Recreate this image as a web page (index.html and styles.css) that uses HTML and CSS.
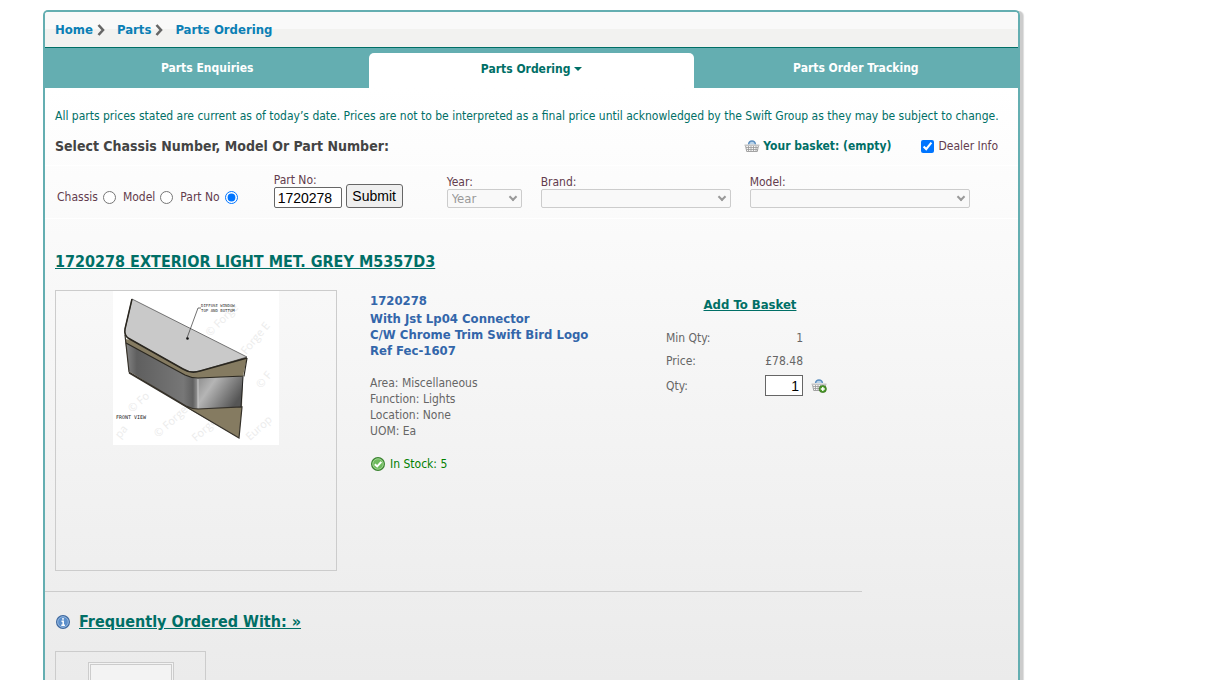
FILE: index.html
```html
<!DOCTYPE html>
<html lang="en">
<head>
    <meta charset="UTF-8">
    <meta name="viewport" content="width=device-width, initial-scale=1.0">
    <title>Parts Ordering</title>
    <link rel="stylesheet" href="styles.css">
</head>
<body>
    <div class="wrapper">
        <!-- Breadcrumb -->
        <nav class="breadcrumb">
            <a href="#">Home</a>
            <svg class="chevron" width="8" height="12" viewBox="0 0 8 12"><path d="M1.5 1 L6 6 L1.5 11" fill="none" stroke="#666" stroke-width="2.6"/></svg>
            <a href="#">Parts</a>
            <svg class="chevron" width="8" height="12" viewBox="0 0 8 12"><path d="M1.5 1 L6 6 L1.5 11" fill="none" stroke="#666" stroke-width="2.6"/></svg>
            <a href="#">Parts Ordering</a>
        </nav>

        <!-- Tabs -->
        <nav class="tabs">
            <a href="#">Parts Enquiries</a>
            <a href="#" class="active">Parts Ordering <span class="caret"></span></a>
            <a href="#">Parts Order Tracking</a>
        </nav>

        <main>
            <p class="notice">All parts prices stated are current as of today’s date. Prices are not to be interpreted as a final price until acknowledged by the Swift Group as they may be subject to change.</p>

            <div class="search-head">
                <h2>Select Chassis Number, Model Or Part Number:</h2>
                <a href="#" class="basket">
                    <svg width="16" height="14" viewBox="0 0 16 14">
                        <path d="M4.5 5.5 Q5 2 8 2 Q11 2 11.5 5.5" fill="#b9d3ea" stroke="#5c8fc0" stroke-width="1.4"/>
                        <path d="M1.5 6.5 H14.5 L13.3 12.5 H2.7 Z" fill="#f6f6f6" stroke="#999" stroke-width="0.9"/>
                        <path d="M0.5 5.5 H15.5 V7 H0.5 Z" fill="#c4c4c4"/>
                        <path d="M2 8.5 H14 M2.5 10.5 H13.5 M4.5 7 V12 M7 7 V12 M9.5 7 V12 M12 7 V12" stroke="#999" stroke-width="0.8"/>
                    </svg>
                    Your basket: (empty)
                </a>
                <label class="dealer"><input type="checkbox" checked> Dealer Info</label>
            </div>

            <!-- Search form -->
            <form class="search">
                <div class="radios">
                    <label>Chassis <input type="radio" name="by"></label>
                    <label>Model <input type="radio" name="by"></label>
                    <label>Part No <input type="radio" name="by" checked></label>
                </div>
                <div class="field part">
                    <label for="partno">Part No:</label>
                    <input type="text" id="partno" value="1720278">
                </div>
                <button type="button" class="submit">Submit</button>
                <div class="field year">
                    <label for="year">Year:</label>
                    <div class="select"><select id="year" disabled><option>Year</option></select></div>
                </div>
                <div class="field brand">
                    <label for="brand">Brand:</label>
                    <div class="select"><select id="brand" disabled><option></option></select></div>
                </div>
                <div class="field model">
                    <label for="model">Model:</label>
                    <div class="select"><select id="model" disabled><option></option></select></div>
                </div>
            </form>

            <!-- Product -->
            <section class="product">
                <h1><a href="#">1720278 EXTERIOR LIGHT MET. GREY M5357D3</a></h1>
                <div class="columns">
                    <a href="#" class="photo">
                        <svg width="166" height="154" viewBox="0 0 166 154">
                            <defs>
                                <linearGradient id="side" x1="0" y1="0" x2="1" y2="0">
                                    <stop offset="0" stop-color="#858585"/>
                                    <stop offset="0.15" stop-color="#5f5f5f"/>
                                    <stop offset="0.8" stop-color="#777"/>
                                    <stop offset="0.93" stop-color="#606060"/>
                                    <stop offset="1" stop-color="#999"/>
                                </linearGradient>
                                <linearGradient id="end" x1="0" y1="0" x2="1" y2="0.5">
                                    <stop offset="0" stop-color="#8d8d8d"/>
                                    <stop offset="0.35" stop-color="#b5b5b5"/>
                                    <stop offset="1" stop-color="#555"/>
                                </linearGradient>
                            </defs>
                            <rect width="166" height="154" fill="#fff"/>
                            <g class="watermark">
                                <text transform="translate(97 46) rotate(-45)">© Forge</text>
                                <text transform="translate(133 64) rotate(-50)">Forge E</text>
                                <text transform="translate(19 122) rotate(-42)">© Fo</text>
                                <text transform="translate(148 98) rotate(-50)">© F</text>
                                <text transform="translate(45 147) rotate(-42)">© Forge</text>
                                <text transform="translate(83 151) rotate(-42)">Forge</text>
                                <text transform="translate(137 150) rotate(-42)">Europ</text>
                                <text transform="translate(7 148) rotate(-50)">pa</text>
                            </g>
                            <path d="M12 48 L16 80 L76 118 L126 147 L129 116 L130 85 L134 67 Z" fill="#857b61"/>
                            <path d="M13 52 L72 84 Q78 87 85 87 V118 Q79 118 73 115 L16 80 Z" fill="url(#side)"/>
                            <path d="M85 87 L130 85 L128 116 L85 118 Z" fill="url(#end)"/>
                            <path d="M85 88 V117" stroke="#ccc"/>
                            <path d="M19 8 L134 66 L87 80 Q78 83 70 78 L15 47 Q11 44 12 38 Z" fill="#c9c9c9" stroke="#555" stroke-width="0.8"/>
                            <path d="M134 67 L87 80 Q78 83 70 78 L15 47 Q11 44 12 38 L19 8" fill="none" stroke="#29261f" stroke-width="1.5"/>
                            <path d="M13 52 L72 84 Q78 87 85 87 L131 85 L134 67" fill="none" stroke="#2b2820" stroke-width="1.2"/>
                            <path d="M12 44 L16 81 L73 115 Q79 118 85 118 L129 116 L126 147 L16 82" fill="none" stroke="#35312a" stroke-width="1.2"/>
                            <path d="M130 86 L128 116" stroke="#222"/>
                            <path d="M74 47 L85 17 H88" fill="none" stroke="#333" stroke-width="0.7"/>
                            <circle cx="74.5" cy="47.5" r="1.3" fill="#111"/>
                            <text x="88" y="16" class="tiny">DIFFUSE WINDOW</text>
                            <text x="88" y="21" class="tiny">TOP AND BOTTOM</text>
                            <text x="3" y="128" class="view">FRONT VIEW</text>
                        </svg>
                    </a>
                    <div class="details">
                        <h3>1720278</h3>
                        <p class="description">With Jst Lp04 Connector<br>C/W Chrome Trim Swift Bird Logo<br>Ref Fec-1607</p>
                        <p class="specs">Area: Miscellaneous<br>Function: Lights<br>Location: None<br>UOM: Ea</p>
                        <p class="stock">
                            <svg width="14" height="14" viewBox="0 0 14 14">
                                <circle cx="7" cy="7" r="6.4" fill="#6fba5e" stroke="#3d8433" stroke-width="1.2"/>
                                <circle cx="7" cy="7" r="5.2" fill="none" stroke="#a8d99c" stroke-width="0.8"/>
                                <path d="M3.8 7.2 L6.2 9.4 L10.3 4.8" fill="none" stroke="#fff" stroke-width="2"/>
                            </svg>
                            In Stock: 5
                        </p>
                    </div>
                    <div class="order">
                        <a href="#" class="add">Add To Basket</a>
                        <table>
                            <tr><td>Min Qty:</td><td class="num">1</td><td></td></tr>
                            <tr><td>Price:</td><td class="num">£78.48</td><td></td></tr>
                            <tr class="qty">
                                <td><label for="qty">Qty:</label></td>
                                <td class="num"><input type="text" id="qty" value="1"></td>
                                <td>
                                    <button type="button" class="add-icon" aria-label="Add">
                                        <svg width="16" height="14" viewBox="0 0 16 14">
                                            <path d="M4.5 4 Q5 1 8 1 Q11 1 11.5 4" fill="#b9d3ea" stroke="#5c8fc0" stroke-width="1.4"/>
                                            <path d="M1.5 5.5 H14.5 L13.3 11.5 H2.7 Z" fill="#f6f6f6" stroke="#999" stroke-width="0.9"/>
                                            <path d="M0.5 4.5 H15.5 V6 H0.5 Z" fill="#c4c4c4"/>
                                            <path d="M2 7.5 H14 M2.5 9.5 H13 M4.5 6 V11 M7 6 V11 M9.5 6 V11" stroke="#999" stroke-width="0.8"/>
                                            <circle cx="11.8" cy="10" r="3.6" fill="#4c9a2a" stroke="#2f6d17" stroke-width="0.7"/>
                                            <path d="M11.8 8 V12 M9.8 10 H13.8" stroke="#fff" stroke-width="1.4"/>
                                        </svg>
                                    </button>
                                </td>
                            </tr>
                        </table>
                    </div>
                </div>
            </section>

            <hr>

            <!-- Related parts -->
            <section class="related">
                <h2>
                    <svg width="14" height="14" viewBox="0 0 14 14">
                        <circle cx="7" cy="7" r="6.4" fill="#5c8fcb" stroke="#416a9f" stroke-width="1.2"/>
                        <circle cx="7" cy="7" r="5.3" fill="none" stroke="#a3c0e2" stroke-width="0.8"/>
                        <path d="M7 3 V4.8 M5.5 6.2 H7.2 V10 M5.3 10.3 H8.9" fill="none" stroke="#fff" stroke-width="1.5"/>
                    </svg>
                    <a href="#">Frequently Ordered With: »</a>
                </h2>
                <div class="card"><div class="thumb"></div></div>
            </section>
        </main>
    </div>
</body>
</html>
```
FILE: styles.css
```css
* {
    box-sizing: border-box;
}

body {
    margin: 0;
    height: 100vh;
    padding: 10px 43px 0;
    overflow: hidden;
    background: #fff;
    color: #666;
    font: 12px/16px "DejaVu Sans Condensed", Tahoma, sans-serif;
}

h1, h2, h3, p {
    margin: 0;
}

a {
    color: #006f66;
}

/* Outer frame */
.wrapper {
    display: flex;
    flex-direction: column;
    max-width: 977px;
    height: 100%;
    border: 2px solid #64aeb1;
    border-bottom: 0;
    border-radius: 5px 5px 0 0;
    box-shadow: 3px 1px 0 #ccc, 4px 1px 1px #ddd;
}

/* Breadcrumb */
.breadcrumb {
    display: flex;
    align-items: center;
    gap: 4px;
    height: 36px;
    flex: none;
    padding: 0 10px;
    border-bottom: 1px solid #006f66;
    border-radius: 3px 3px 0 0;
    background: linear-gradient(#f9f9f9 50%, #f2f2f0 50%);
    font-size: 13px;
    font-weight: bold;
}

.breadcrumb a {
    color: #0b7fb5;
    text-decoration: none;
}

.chevron {
    margin-right: 8px;
}

/* Tabs */
.tabs {
    display: grid;
    grid-template-columns: repeat(3, 1fr);
    flex: none;
    padding-top: 5px;
    background: #64aeb1;
}

.tabs a {
    height: 35px;
    padding-top: 7px;
    color: #fff;
    font-weight: bold;
    text-align: center;
    text-decoration: none;
}

.tabs .active {
    padding-top: 8px;
    border-radius: 5px 5px 0 0;
    background: #fff;
    color: #006f66;
}

.caret {
    display: inline-block;
    border: 4px solid transparent;
    border-top-color: #006f66;
    border-bottom: 0;
    vertical-align: 2px;
}

main {
    flex: 1;
    min-height: 0;
    overflow: hidden;
    background: linear-gradient(#fff, #ebebeb);
}

.notice {
    padding: 20px 10px 0;
    color: #006f66;
}

.search-head {
    display: flex;
    align-items: center;
    height: 20px;
    margin-top: 12px;
    padding: 0 20px 0 10px;
}

.search-head h2 {
    margin-right: auto;
    color: #444;
    font-size: 14px;
}

.basket {
    display: flex;
    align-items: center;
    gap: 3px;
    font-weight: bold;
    text-decoration: none;
}

.dealer {
    display: flex;
    align-items: center;
    gap: 4px;
    margin-left: 30px;
    color: #633c4d;
}

.dealer input {
    width: 13px;
    height: 13px;
    margin: 0;
}

/* Search form */
.search {
    display: flex;
    align-items: flex-end;
    height: 54px;
    margin-top: 9px;
    padding: 0 12px 10px;
    border-top: 1px solid #fff;
    border-bottom: 1px solid #fff;
    color: #633c4d;
}

.radios {
    display: flex;
    gap: 7px;
    height: 22px;
    margin-right: 36px;
}

.radios label {
    display: flex;
    align-items: center;
    gap: 5px;
}

.radios input {
    width: 13px;
    height: 13px;
    margin: 0;
}

.field {
    display: flex;
    flex-direction: column;
}

.field label {
    line-height: 14px;
}

.part {
    width: 68px;
}

.part input {
    width: 100%;
    height: 21px;
    padding: 1px 3px;
    border: 1px solid #666;
    border-radius: 2px;
    font: 14px "Liberation Sans", sans-serif;
}

.submit {
    width: 57px;
    height: 24px;
    margin: 0 44px 0 4px;
    padding: 0;
    border: 1px solid #666;
    border-radius: 3px;
    background: #efefef;
    color: #000;
    font: 14px "Liberation Sans", sans-serif;
}

.select {
    position: relative;
}

.select::after {
    content: "";
    position: absolute;
    top: 5px;
    right: 6px;
    width: 4px;
    height: 4px;
    border: solid #999;
    border-width: 0 2px 2px 0;
    transform: rotate(45deg);
}

.select select {
    display: block;
    width: 100%;
    height: 19px;
    padding: 0 4px;
    border: 1px solid #ccc;
    border-radius: 2px;
    appearance: none;
    background: #f9f9f9;
    color: #999;
    font: 13px "DejaVu Sans Condensed", Tahoma, sans-serif;
    opacity: 1;
}

.year {
    width: 75px;
    margin-right: 19px;
}

.brand {
    width: 190px;
    margin-right: 19px;
}

.model {
    width: 220px;
}

/* Product */
.product {
    padding: 33px 10px 0;
}

.product h1 {
    font-size: 16px;
    line-height: 20px;
}

.columns {
    display: flex;
    margin-top: 18px;
}

.photo {
    display: flex;
    justify-content: center;
    align-items: flex-start;
    width: 282px;
    height: 281px;
    margin-right: 33px;
    border: 1px solid #ccc;
}

.watermark {
    fill: #ececec;
    font: 11px "Open Sans", sans-serif;
}

.tiny {
    fill: #333;
    font: 4px "DejaVu Sans Mono", monospace;
}

.view {
    fill: #222;
    font: 5px "DejaVu Sans Mono", monospace;
}

.details {
    width: 296px;
    padding-top: 3px;
}

.details h3 {
    color: #36a;
    font-size: 13px;
}

.description {
    margin-top: 2px;
    color: #36a;
    font-size: 13px;
    font-weight: bold;
}

.specs {
    margin-top: 16px;
}

.stock {
    display: flex;
    align-items: center;
    gap: 5px;
    margin-top: 17px;
    padding-left: 1px;
    color: #008000;
}

.order {
    width: 168px;
    padding-top: 7px;
}

.add {
    display: block;
    font-size: 13px;
    font-weight: bold;
    text-align: center;
}

.order table {
    margin-top: 13px;
    border-collapse: collapse;
}

.order td {
    width: 24px;
    height: 23px;
    padding: 0;
}

.order td:first-child {
    width: 76px;
}

.order .num {
    width: 61px;
    text-align: right;
}

.order .qty td {
    height: 27px;
}

.qty input {
    display: block;
    width: 38px;
    height: 21px;
    margin-left: auto;
    padding: 1px 3px;
    border: 1px solid #666;
    font: 14px "Liberation Sans", sans-serif;
    text-align: right;
}

.add-icon {
    display: block;
    margin-left: 8px;
    padding: 0;
    border: 0;
    background: none;
}

.add-icon svg {
    display: block;
}

hr {
    width: 84%;
    height: 1px;
    margin: 20px 0 0;
    border: 0;
    background: #ccc;
}

/* Related parts */
.related {
    padding: 20px 10px 0;
}

.related h2 {
    display: flex;
    align-items: center;
    gap: 9px;
    padding-left: 1px;
    font-size: 16px;
    line-height: 20px;
}

.card {
    display: flex;
    justify-content: center;
    width: 151px;
    height: 160px;
    margin-top: 19px;
    padding-top: 10px;
    border: 1px solid #ccc;
}

.thumb {
    width: 86px;
    height: 86px;
    border: 3px double #ccc;
    background: #f3f3f3;
}
```
